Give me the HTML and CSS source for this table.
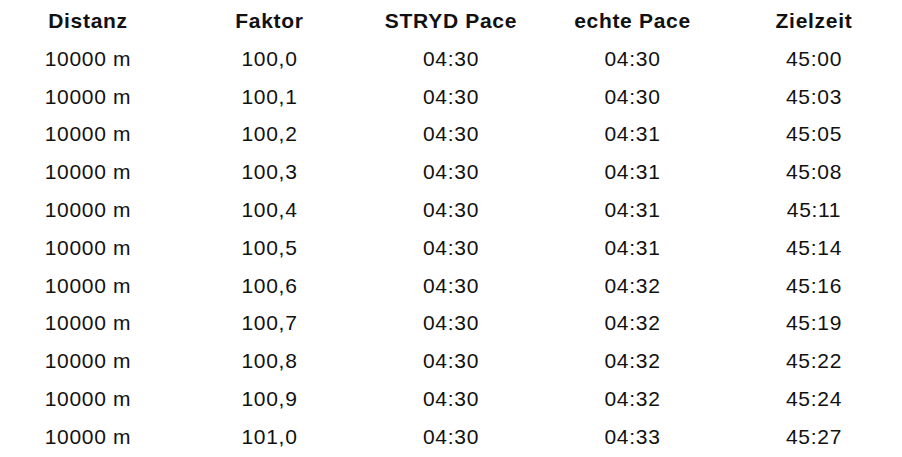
FILE: index.html
```html
<!DOCTYPE html>
<html lang="de">
<head>
<meta charset="utf-8">
<title>Pace Tabelle</title>
<link rel="stylesheet" href="styles.css">
</head>
<body>
<div class="table">
  <div class="cell head">Distanz</div><div class="cell head">Faktor</div><div class="cell head">STRYD Pace</div><div class="cell head">echte Pace</div><div class="cell head">Zielzeit</div>
  <div class="cell">10000 m</div><div class="cell">100,0</div><div class="cell">04:30</div><div class="cell">04:30</div><div class="cell">45:00</div>
  <div class="cell">10000 m</div><div class="cell">100,1</div><div class="cell">04:30</div><div class="cell">04:30</div><div class="cell">45:03</div>
  <div class="cell">10000 m</div><div class="cell">100,2</div><div class="cell">04:30</div><div class="cell">04:31</div><div class="cell">45:05</div>
  <div class="cell">10000 m</div><div class="cell">100,3</div><div class="cell">04:30</div><div class="cell">04:31</div><div class="cell">45:08</div>
  <div class="cell">10000 m</div><div class="cell">100,4</div><div class="cell">04:30</div><div class="cell">04:31</div><div class="cell">45:11</div>
  <div class="cell">10000 m</div><div class="cell">100,5</div><div class="cell">04:30</div><div class="cell">04:31</div><div class="cell">45:14</div>
  <div class="cell">10000 m</div><div class="cell">100,6</div><div class="cell">04:30</div><div class="cell">04:32</div><div class="cell">45:16</div>
  <div class="cell">10000 m</div><div class="cell">100,7</div><div class="cell">04:30</div><div class="cell">04:32</div><div class="cell">45:19</div>
  <div class="cell">10000 m</div><div class="cell">100,8</div><div class="cell">04:30</div><div class="cell">04:32</div><div class="cell">45:22</div>
  <div class="cell">10000 m</div><div class="cell">100,9</div><div class="cell">04:30</div><div class="cell">04:32</div><div class="cell">45:24</div>
  <div class="cell">10000 m</div><div class="cell">101,0</div><div class="cell">04:30</div><div class="cell">04:33</div><div class="cell">45:27</div>
</div>
</body>
</html>
```
FILE: styles.css
```css
html, body {
  margin: 0;
  padding: 0;
  background: #ffffff;
  overflow: hidden;
}

body {
  font-family: "Liberation Sans", Arial, sans-serif;
  color: #111111;
}

.table {
  display: grid;
  grid-template-columns: repeat(5, 181.5px);
  grid-auto-rows: 37.8px;
  width: 907.5px;
  margin-left: -2.75px;
  padding-top: 2px;
}

.cell {
  font-size: 21px;
  line-height: 37.8px;
  letter-spacing: 0.7px;
  text-align: center;
  white-space: nowrap;
}

.head {
  font-weight: bold;
}
```
